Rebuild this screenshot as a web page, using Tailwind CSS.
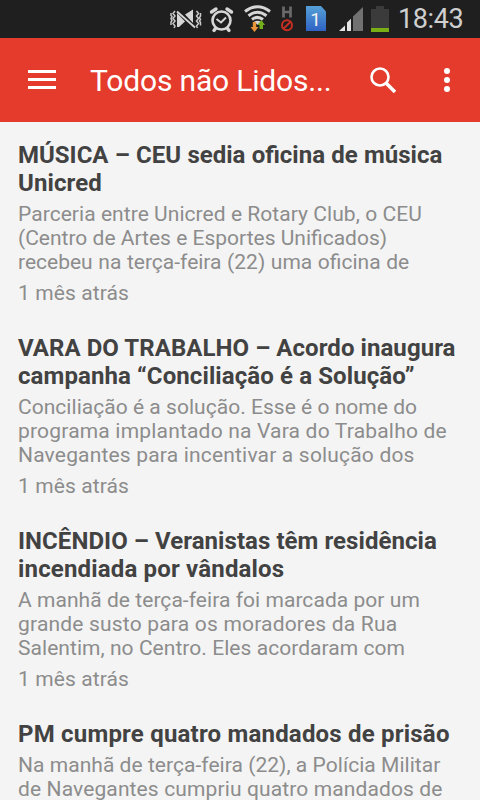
<!DOCTYPE html>
<html lang="pt-BR">
<head>
  <meta charset="UTF-8">
  <meta name="viewport" content="width=device-width, initial-scale=1.0">
  <title>Todos não Lidos</title>
  <script src="https://cdn.jsdelivr.net/npm/@tailwindcss/browser@4"></script>
</head>
<body class="w-[480px] h-[800px] overflow-hidden bg-[#f4f4f4] font-['Roboto',sans-serif]">
  <!-- Status bar -->
  <div class="h-[38px] bg-[#1f1f1f] flex">
    <svg class="w-[395px] h-[38px] shrink-0" viewBox="0 0 395 38" fill="none">
      <!-- vibrate / mute -->
      <path d="M175 11l-2 2.500 2 2.500-2 2.500 2 2.500-2 2.500 2 2.500-1 2M171 13v2.500l1 1-1 2 1 2-1 1.500v3M196.500 11l2 2.500-2 2.500 2 2.500-2 2.500 2 2.500-2 2.500 1 2M200.500 13v3l-1 1.500 1 2-1 1.500 1 1.500v3" stroke="#c9c9c9" stroke-width="1.500"/>
      <path d="M177 13v14h2l6-5.500zM185 14.500l8-5v13.500z" fill="#d6d6d6"/>
      <path d="M177 11.500l18 16" stroke="#d6d6d6" stroke-width="1.800"/>
      <!-- alarm -->
      <circle cx="221.500" cy="20.500" r="9" stroke="#d6d6d6" stroke-width="2.600"/>
      <path d="M216.500 19l4.500 3.500 5-5" stroke="#d6d6d6" stroke-width="2"/>
      <path d="M211.500 12l4.500-3M231.500 12l-4.500-3M215.500 28.500l-1.500 2M227.500 28.500l1.500 2" stroke="#d6d6d6" stroke-width="3.400" stroke-linecap="round"/>
      <!-- wifi -->
      <path d="M245 11.500q12.500-9.500 25 0M248.500 15.700q9-7 18 0M252 19.500q5.500-4.300 11 0" stroke="#d6d6d6" stroke-width="3"/>
      <path d="M254 21.800q3.500-2 7 0l-3.500 3z" fill="#d6d6d6"/>
      <path d="M252.800 22h3.400v5h2.300l-4 5-4-5h2.300z" fill="#e8923a"/>
      <path d="M259.500 29h3.500v-4h2l-3.700-5-3.800 5h2z" fill="#75ae1b"/>
      <!-- mobile data off -->
      <path d="M283.500 6.500v11M290.500 6.500v11M283 12h8" stroke="#6a6a6a" stroke-width="2.700"/>
      <circle cx="287" cy="25.300" r="5" stroke="#c52f22" stroke-width="2"/>
      <path d="M283.500 28.800l7-7" stroke="#c52f22" stroke-width="2"/>
      <!-- SIM card -->
      <defs><linearGradient id="sim" x1="0" y1="0" x2="0" y2="1"><stop stop-color="#55a0d6"/><stop offset="1" stop-color="#2f62c4"/></linearGradient></defs>
      <path d="M306 6h15l5 5.500V31h-20z" fill="url(#sim)"/>
      <text x="315.500" y="25.500" text-anchor="middle" font-size="19" fill="#f2f2f2">1</text>
      <!-- signal -->
      <path d="M339 31l6-5.500V31zM347 31v-8.500l4-3.700V31z" fill="#e4e4e4"/>
      <path d="M353 31V16.500l10-9.500v24z" fill="#717171"/>
      <!-- battery -->
      <path d="M371 9h5V6h8v3h5v19h-18z" fill="#3b3b3b"/>
      <path d="M371 28h18v4h-18z" fill="#7aae16"/>
    </svg>
    <span class="ml-[3px] text-[27px] leading-[38px] tracking-[-0.4px] text-[#cfcfcf] whitespace-nowrap">18:43</span>
  </div>

  <!-- App bar -->
  <header class="h-[84px] bg-[#e43b2c] flex items-center text-white">
    <button class="ml-7 w-7 pb-px flex flex-col gap-[5px]" aria-label="Menu">
      <span class="h-[3px] bg-white"></span>
      <span class="h-[3px] bg-white"></span>
      <span class="h-[3px] bg-white"></span>
    </button>
    <h1 class="ml-[34px] w-[280px] text-[30px] leading-[35px] tracking-[-0.17px] whitespace-nowrap">Todos não Lidos...</h1>
    <svg class="w-[27px] h-[27px]" viewBox="0 0 27 27" fill="none" stroke="#fff">
      <circle cx="10" cy="10" r="8.500" stroke-width="2.600"/>
      <path d="M16 16l9 9" stroke-width="3.600"/>
    </svg>
    <svg class="ml-[47px] w-[6px] h-[24px]" viewBox="0 0 6 24" fill="#fff">
      <circle cx="3" cy="3" r="3"/>
      <circle cx="3" cy="12" r="3"/>
      <circle cx="3" cy="21" r="3"/>
    </svg>
  </header>

  <!-- News list -->
  <main class="pt-[19px] px-[18px] flex flex-col gap-[29px] whitespace-nowrap">
    <article>
      <h2 class="text-2xl leading-7 font-bold text-[#424242]"><span class="[word-spacing:0.3px]">MÚSICA – CEU sedia oficina de música</span><br><span class="tracking-[0.1px]">Unicred</span></h2>
      <p class="mt-[5px] text-[21px] leading-6 text-[#8c8c8c]"><span class="tracking-[0.05px]">Parceria entre Unicred e Rotary Club, o CEU</span><br>(Centro de Artes e Esportes Unificados)<br><span class="[word-spacing:0.4px]">recebeu na terça-feira (22) uma oficina de</span></p>
      <p class="mt-[7px] text-[21px] leading-6 tracking-[0.1px] text-[#8c8c8c]">1 mês atrás</p>
    </article>
    <article>
      <h2 class="text-2xl leading-7 font-bold text-[#424242]"><span class="tracking-[0.06px]">VARA DO TRABALHO – Acordo inaugura</span><br><span class="tracking-[0.1px]">campanha “Conciliação é a Solução”</span></h2>
      <p class="mt-[5px] text-[21px] leading-6 text-[#8c8c8c]"><span class="tracking-[0.03px]">Conciliação é a solução. Esse é o nome do</span><br><span class="tracking-[0.19px]">programa implantado na Vara do Trabalho de</span><br><span class="tracking-[0.18px]">Navegantes para incentivar a solução dos</span></p>
      <p class="mt-[7px] text-[21px] leading-6 tracking-[0.1px] text-[#8c8c8c]">1 mês atrás</p>
    </article>
    <article>
      <h2 class="text-2xl leading-7 font-bold text-[#424242]"><span class="tracking-[0.06px]">INCÊNDIO – Veranistas têm residência</span><br><span class="tracking-[0.17px]">incendiada por vândalos</span></h2>
      <p class="mt-[5px] text-[21px] leading-6 text-[#8c8c8c]"><span class="tracking-[0.05px]">A manhã de terça-feira foi marcada por um</span><br><span class="tracking-[0.19px]">grande susto para os moradores da Rua</span><br><span class="tracking-[0.05px]">Salentim, no Centro. Eles acordaram com</span></p>
      <p class="mt-[7px] text-[21px] leading-6 tracking-[0.1px] text-[#8c8c8c]">1 mês atrás</p>
    </article>
    <article>
      <h2 class="text-2xl leading-7 font-bold tracking-[0.2px] text-[#424242]">PM cumpre quatro mandados de prisão</h2>
      <p class="mt-[5px] text-[21px] leading-6 text-[#8c8c8c]"><span class="tracking-[0.04px]">Na manhã de terça-feira (22), a Polícia Militar</span><br><span class="tracking-[0.12px]">de Navegantes cumpriu quatro mandados de</span></p>
    </article>
  </main>
</body>
</html>
